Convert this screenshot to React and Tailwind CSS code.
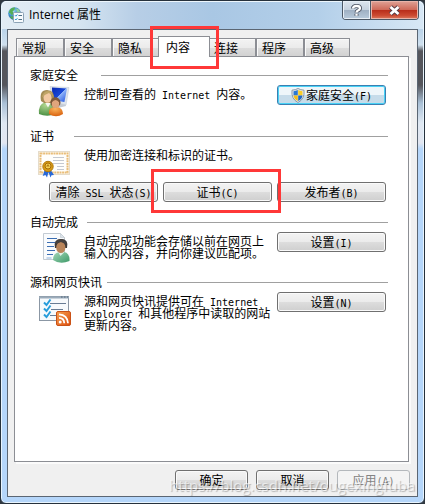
import React from 'react';

const tabs = ['常规', '安全', '隐私', '内容', '连接', '程序', '高级'];

function Mono({ children }) {
  return <span className="whitespace-pre font-['DejaVu_Sans_Mono',monospace] text-[10px] leading-[0]">{children}</span>;
}

function Highlight({ className }) {
  return <span aria-hidden="true" className={`pointer-events-none absolute z-20 border-[3px] border-[#ff3838] ${className}`} />;
}

function PushButton({ children, icon, className = 'w-[109px]', primary = false, disabled = false }) {
  const look = disabled
    ? 'border-[#b4b8bc] bg-[#f4f4f4] text-[#838383]'
    : primary
      ? 'border-[#3c7fb1] bg-linear-to-b from-[#eef6fa] from-50% to-[#c6dcea] to-50% shadow-[inset_0_0_0_1px_#48d2f6]'
      : 'border-[#707070] bg-[linear-gradient(#f3f3f3,#ebebeb_50%,#dddddd_50%,#cfcfcf)] shadow-[inset_0_0_0_1px_#fafafa]';
  return (
    <button
      type="button"
      disabled={disabled}
      className={`flex h-5 shrink-0 items-center justify-center whitespace-nowrap rounded-[3px] border leading-3 ${look} ${className}`}
    >
      {icon}
      <span>{children}</span>
    </button>
  );
}

function Section({ title, gap, className, children }) {
  return (
    <section className={className}>
      <div className={`flex h-[14px] items-center ${gap}`}>
        <h2 className="leading-[14px]">{title}</h2>
        <span className="h-px flex-1 bg-[#a0a0a0]" />
      </div>
      {children}
    </section>
  );
}

function Row({ icon, text, button }) {
  return (
    <div className="flex items-start pt-[3px] pr-[2px] pl-2">
      <div className="w-[46px] shrink-0">{icon}</div>
      <p className="flex-1 pt-[3px] pr-1 leading-3">{text}</p>
      {button}
    </div>
  );
}

function GlobeIcon() {
  return (
    <svg className="h-4 w-4" viewBox="0 0 16 16" aria-hidden="true">
      <defs>
        <radialGradient id="globe" cx="35%" cy="30%" r="75%">
          <stop offset="0" stopColor="#b9e6fa" />
          <stop offset=".5" stopColor="#3f96cf" />
          <stop offset="1" stopColor="#164e92" />
        </radialGradient>
      </defs>
      <circle cx="6.5" cy="6.5" r="6.3" fill="url(#globe)" />
      <path d="M2 2.5Q4 0 7 .6L6.5 3 4.6 4.3 5.5 6 4 8.6 2.4 6.5 .8 5.5ZM3 9l3 1-.6 2.4Q3.5 11.8 2 10Z" fill="#54ae55" />
      <path d="M8 1.3l3 1.3 1.5 3L10 6 8.5 4Z" fill="#8fd0a0" />
      <rect x="5.5" y="5.5" width="10" height="10" rx=".8" fill="#f6fafd" stroke="#8ba2b5" />
      <path d="m7 8.2.9 1L9.4 7.4M7 12l.9 1 1.5-1.8" fill="none" stroke="#2c9ad0" />
      <path d="M10.5 8.5H14M10.5 12.5H14" stroke="#4e7186" />
    </svg>
  );
}

function FamilyIcon() {
  return (
    <svg className="h-8 w-8" viewBox="0 0 32 32" aria-hidden="true">
      <defs>
        <linearGradient id="screen" x1="0" y1="0" x2="1" y2="1">
          <stop offset="0" stopColor="#0828b0" />
          <stop offset=".5" stopColor="#1848d8" />
          <stop offset=".52" stopColor="#8fb4f8" />
          <stop offset="1" stopColor="#1c4fe0" />
        </linearGradient>
        <radialGradient id="green" cx="40%" cy="20%" r="80%">
          <stop offset="0" stopColor="#b2d790" />
          <stop offset="1" stopColor="#4d9145" />
        </radialGradient>
        <radialGradient id="orange" cx="45%" cy="20%" r="80%">
          <stop offset="0" stopColor="#fbb55c" />
          <stop offset="1" stopColor="#d9620f" />
        </radialGradient>
      </defs>
      <path d="m20 18 7-1 1 4-8 2z" fill="#c5ccd5" />
      <path d="m12 1.500 19 1-3 17.500-13-3z" fill="#dfe5ec" stroke="#c6ced8" strokeWidth=".6" />
      <path d="m14 2.500 15 1-2.600 13.500-12-2z" fill="url(#screen)" />
      <path d="M1 29Q0 19 7 17.500h7q4 1 4 6l-1 6Q8 32 1 29z" fill="url(#green)" />
      <path d="m7 17.500 3 5 3-5z" fill="#f5f7ef" />
      <path d="M3 16Q1 5 9 5t7 10l-3 3H6z" fill="#a58c55" />
      <ellipse cx="9.500" cy="12.500" rx="4" ry="5.300" fill="#f3c9a2" />
      <path d="M4 12.500Q5 6 10 6q5 0 5 6-1-3-4-4-4 1-7 4.500z" fill="#c0a566" />
      <path d="M11 29q-1-6 5-7h3q6 1 6 7-7 4.500-14 0z" fill="url(#orange)" />
      <circle cx="17.500" cy="17.500" r="5" fill="#765033" />
      <ellipse cx="17.500" cy="18.800" rx="3.700" ry="4.200" fill="#e0a57c" />
      <path d="M13.500 17.500q2-2.500 4-2.500t4 2.500q0-5-4-5t-4 5z" fill="#7f5a3a" />
    </svg>
  );
}

function CertificateIcon() {
  return (
    <svg className="mt-[5px] h-[27px] w-8" viewBox="0 0 32 27" aria-hidden="true">
      <rect x=".5" y=".5" width="31" height="23" fill="#faf7ef" stroke="#e5dccb" />
      <rect x="2.500" y="2.500" width="27" height="19" fill="#fffefb" stroke="#e9bd78" strokeWidth="2" strokeDasharray="2 .6" />
      <path d="M15 6.500h11M15 9.500h11M15 12.500h11M19 15.500h7M19 18.500h7" stroke="#c5c9d0" />
      <path d="m7 18-2.300 7 2.700-1 1.600 2.500 2-7zM12 18l4 6-2.500.200-1 2.300-2.400-6.500z" fill="#2969d7" />
      <circle cx="10" cy="15.500" r="5.200" fill="#d89b16" stroke="#b1780c" />
      <circle cx="10" cy="15" r="3" fill="#f3cf54" stroke="#a66b05" />
      <path d="M8 15.500 10 13l1.800 2.500z" fill="#b27c13" />
    </svg>
  );
}

function ProfileIcon() {
  return (
    <svg className="ml-1 h-8 w-7" viewBox="0 0 28 32" aria-hidden="true">
      <defs>
        <linearGradient id="shirt" x1="0" y1="0" x2="1" y2="1">
          <stop offset="0" stopColor="#a4d8b9" />
          <stop offset="1" stopColor="#3d9968" />
        </linearGradient>
      </defs>
      <path d="M1.500 1.500h17l4 4v22h-21z" fill="#f9fbfd" stroke="#c3cbd3" />
      <path d="M18.500 1.500v4h4z" fill="#dde4ea" stroke="#c3cbd3" strokeWidth=".7" />
      <path d="M5 6.500h10M5 10.500h8M5 14.500h7M5 18.500h8M5 22.500h6" stroke="#3b6eb3" strokeWidth="1.200" />
      <path d="M4.500 26h5" stroke="#8db1da" />
      <path d="M11 28q0-7 6-8h5q6 1 5.500 9Q18 33 11 28z" fill="url(#shirt)" />
      <path d="m16 20 2.500 4 4-4z" fill="#e2f0e7" />
      <path d="M13 16q-2-9 6-9t6 9z" fill="#3b3837" />
      <ellipse cx="18.800" cy="15.500" rx="4.600" ry="5.600" fill="#b98459" />
      <path d="M13.500 13.500q1-2.500 5.500-3.500 4.500 1 5.500 3.500 0-6.500-5.500-6.500t-5.500 6.500z" fill="#45403e" />
    </svg>
  );
}

function FeedIcon() {
  return (
    <svg className="mt-[3px] h-[31px] w-[33px]" viewBox="0 0 33 31" aria-hidden="true">
      <defs>
        <linearGradient id="feed" x1="0" y1="0" x2="1" y2="1">
          <stop offset="0" stopColor="#f6a252" />
          <stop offset="1" stopColor="#dc4c0c" />
        </linearGradient>
      </defs>
      <rect x="1.500" y="1.500" width="29" height="24" fill="#f7fafc" stroke="#8b97a4" />
      <path d="M1 2.500h30" stroke="#9aabba" strokeWidth="2" />
      <path d="M23 2h1.500M26 2h1.500M29 2h1" stroke="#526678" />
      <path d="M12 8.500h16M13 14.500h12M12 20.500h6" stroke="#687c94" />
      <path d="m6 7.500 2.500 2.500L12.500 4.500M6 13.500l2.500 2.500 4-5.500M6 19.500 8.500 22l4-5.500" fill="none" stroke="#279ddb" strokeWidth="2" />
      <rect x="18.500" y="16.500" width="14" height="14" rx="1.500" fill="url(#feed)" stroke="#ca5217" />
      <circle cx="22.200" cy="27" r="1.500" fill="#fff" />
      <path d="M21 22.800q5 0 5.300 5.500M21 19.300q8.500.5 9 9" fill="none" stroke="#fff" strokeWidth="1.800" />
    </svg>
  );
}

function ShieldIcon() {
  return (
    <svg className="mr-px h-[15px] w-[14px]" viewBox="0 0 14 15" aria-hidden="true">
      <path d="M7 .5Q9.500 2 13 2.200 14 11 7 14.500 0 11 1 2.200 4.500 2 7 .5z" fill="#e9edf0" stroke="#8a98a5" />
      <path d="M6.800 2Q5 3 2.500 3.300V7.500H6.800z" fill="#2c78d2" />
      <path d="M7.200 2Q9 3 11.500 3.300V7.500H7.200z" fill="#f9cc27" />
      <path d="M2.500 7.500H6.800V13Q3 11 2.500 7.500z" fill="#f5bd18" />
      <path d="M11.500 7.500H7.200V13Q11 11 11.500 7.500z" fill="#2169c4" />
    </svg>
  );
}

export default function App() {
  return (
    <div lang="zh-CN" className="flex min-h-screen bg-[#303840] font-['Noto_Sans_CJK_SC',sans-serif] text-[12px] leading-3 text-black">
      <main className="flex flex-1 flex-col rounded-[6px] border border-[#26313c] bg-[linear-gradient(#c6dcef_0px,#b5d0e8_24px,#cfe0ee_44px,#55565c_50px,#55565c_84px,#a9c0d6_102px,#dfe8f2_122px,#e2e6f0_142px,#b5d6fa_148px,#b5d6fa)] px-[6px] pb-[6px] shadow-[inset_0_0_0_1px_#e8f4fd]">
        <header className="-mx-[5px] flex h-7 items-start rounded-t-[5px] bg-[linear-gradient(90deg,#e2ecf4,#d6e5f1_18%,#b7cee6_32%,#a9c7e4_50%,#b3cfe9_75%,#d7e7f5)] shadow-[inset_0_1px_0_#edf6fc]">
          <div className="flex h-7 flex-1 items-center gap-[5px] pl-[6px]">
            <GlobeIcon />
            <h1 className="font-['Open_Sans','Noto_Sans_CJK_SC',sans-serif] text-[12px] leading-4">Internet 属性</h1>
          </div>
          <div className="mr-1 flex h-[19px] overflow-hidden rounded-b-[4px] border border-t-0 border-[#4c5866]">
            <button type="button" aria-label="帮助" className="flex w-7 items-center justify-center border-r border-[#4c5866] bg-[linear-gradient(#dde5ee,#c5d1de_50%,#9eafc2_50%,#b9cbdc)] shadow-[inset_0_0_0_1px_#e8eff6]">
              <svg className="h-[13px] w-[11px]" viewBox="0 0 11 13" aria-hidden="true">
                <path d="M2 4.500Q2 2 5.500 2T9 4.300Q9 5.700 7 6.500 5.500 7.200 5.500 8.500M5.500 9.800v2" fill="none" stroke="#4c5261" strokeWidth="4" />
                <path d="M2 4.500Q2 2 5.500 2T9 4.300Q9 5.700 7 6.500 5.500 7.200 5.500 8.500M5.500 9.800v2" fill="none" stroke="#fff" strokeWidth="2.300" />
              </svg>
            </button>
            <button type="button" aria-label="关闭" className="flex w-[47px] items-center justify-center bg-[linear-gradient(#e0a397,#cf6a59_48%,#b72c19_50%,#cc4a32_80%,#dc7c60)] shadow-[inset_0_0_0_1px_#e9b4a9]">
              <svg className="h-[11px] w-[13px]" viewBox="0 0 13 11" aria-hidden="true">
                <path d="m2.500 2 8 7m0-7-8 7" stroke="#553c45" strokeWidth="4.600" />
                <path d="m2.500 2 8 7m0-7-8 7" stroke="#fff" strokeWidth="2.800" />
              </svg>
            </button>
          </div>
        </header>

        <div className="flex flex-1 flex-col border border-[#5b6673] bg-[#f0f0f0] pt-[6px] pb-[6px]">
          <nav role="tablist" className="flex h-5 items-end pl-2">
            {tabs.map((tab) =>
              tab === '内容' ? (
                <button key={tab} type="button" role="tab" aria-selected="true" className="relative z-10 -mx-[2px] -mb-px flex h-[21px] w-[52px] items-center border border-b-0 border-[#8c8e94] bg-white pb-px pl-[7px]">
                  {tab}
                  <Highlight className="-top-[11px] -left-[9px] h-[43px] w-[69px]" />
                </button>
              ) : (
                <button key={tab} type="button" role="tab" aria-selected="false" className="flex h-[18px] w-12 items-center border border-b-0 border-[#8c8e94] bg-[linear-gradient(#f3f3f3,#ebebeb_50%,#dddddd_50%,#d2d2d2)] pt-px pl-[5px] shadow-[inset_1px_1px_0_#fafafa] last:w-[46px]">
                  {tab}
                </button>
              )
            )}
          </nav>

          <div role="tabpanel" className="mr-2 ml-[6px] flex-1 border border-[#8c8e94] bg-white pt-[11px] pr-5 pb-4 pl-[15px] shadow-[2px_2px_0_#fbfbfb]">
            <Section title="家庭安全" gap="gap-[23px]" className="min-h-[61px]">
              <Row
                icon={<FamilyIcon />}
                text={<>控制可查看的<Mono> Internet </Mono>内容。</>}
                button={<PushButton primary icon={<ShieldIcon />}>家庭安全<Mono>(F)</Mono></PushButton>}
              />
            </Section>

            <Section title="证书" gap="gap-5" className="min-h-[86px]">
              <Row icon={<CertificateIcon />} text="使用加密连接和标识的证书。" />
              <div className="flex justify-end gap-[5px] pt-1 pr-[2px]">
                <PushButton>清除<Mono> SSL </Mono>状态<Mono>(S)</Mono></PushButton>
                <div className="relative">
                  <PushButton>证书<Mono>(C)</Mono></PushButton>
                  <Highlight className="-top-[13px] -left-3 h-11 w-[130px]" />
                </div>
                <PushButton>发布者<Mono>(B)</Mono></PushButton>
              </div>
            </Section>

            <Section title="自动完成" gap="gap-[9px]" className="min-h-[60px]">
              <Row
                icon={<ProfileIcon />}
                text="自动完成功能会存储以前在网页上输入的内容，并向你建议匹配项。"
                button={<PushButton>设置<Mono>(I)</Mono></PushButton>}
              />
            </Section>

            <Section title="源和网页快讯" gap="gap-[5px]">
              <Row
                icon={<FeedIcon />}
                text={<>源和网页快讯提供可在<Mono> Internet</Mono> <Mono>Explorer </Mono>和其他程序中读取的网站更新内容。</>}
                button={<PushButton>设置<Mono>(N)</Mono></PushButton>}
              />
            </Section>
          </div>

          <footer className="relative flex justify-end gap-2 pt-2 pr-[7px]">
            <PushButton className="w-[73px]">确定</PushButton>
            <PushButton className="w-[73px]">取消</PushButton>
            <PushButton className="w-[73px]" disabled>应用<Mono>(A)</Mono></PushButton>
            <span className="pointer-events-none absolute top-[15px] right-[2px] whitespace-nowrap font-['Open_Sans',sans-serif] text-[15px] leading-4 text-white/60 [text-shadow:1px_1px_1px_#00000040]">
              https://blog.csdn.net/ougexingfuba
            </span>
          </footer>
        </div>
      </main>
    </div>
  );
}
